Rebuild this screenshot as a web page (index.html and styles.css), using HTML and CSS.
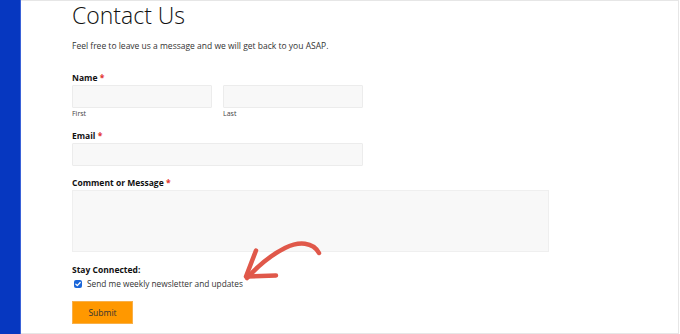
FILE: index.html
```html
<!DOCTYPE html>
<html>
<head>
<meta charset="utf-8">
<link rel="stylesheet" href="styles.css">
</head>
<body>
<div class="page">
  <div class="sidebar"></div>
  <main class="main">
    <h1 class="title">Contact Us</h1>
    <p class="intro">Feel free to leave us a message and we will get back to you ASAP.</p>
    <form class="form">
      <div class="field">
        <div class="label">Name <span class="req">*</span></div>
        <div class="name-row">
          <div class="sub">
            <div class="input"></div>
            <div class="sublabel">First</div>
          </div>
          <div class="sub">
            <div class="input"></div>
            <div class="sublabel">Last</div>
          </div>
        </div>
      </div>
      <div class="field field-email">
        <div class="label">Email <span class="req">*</span></div>
        <div class="input input-wide"></div>
      </div>
      <div class="field field-comment">
        <div class="label">Comment or Message <span class="req">*</span></div>
        <div class="textarea"></div>
      </div>
      <div class="field field-stay">
        <div class="label">Stay Connected:</div>
        <div class="check-row">
          <span class="checkbox"><svg viewBox="0 0 8 8" width="8" height="8"><path d="M1.8 4.1 L3.3 5.6 L6.2 2.5" fill="none" stroke="#fff" stroke-width="1.3" stroke-linecap="round" stroke-linejoin="round"/></svg></span>
          <span class="check-text">Send me weekly newsletter and updates</span>
        </div>
      </div>
      <div class="submit">Submit</div>
    </form>
    <svg class="arrow" viewBox="0 0 90 50" width="90" height="50">
      <path d="M78 27 C72 16 58 15 44 22 C30 29 16 41 6 52" transform="translate(0,-2)" fill="none" stroke="#e0584a" stroke-width="4.5" stroke-linecap="round"/>
      <path d="M15 23 L5 49 L35 48" transform="translate(0,-0.5)" fill="none" stroke="#e0584a" stroke-width="4.5" stroke-linecap="round" stroke-linejoin="round"/>
    </svg>
  </main>
</div>
</body>
</html>
```

FILE: styles.css
```css
html, body {
  margin: 0;
  padding: 0;
  background: #fff;
}
.page {
  display: flex;
  width: 680px;
  height: 334px;
  font-family: "Open Sans", "DejaVu Sans", sans-serif;
  color: #222;
}
.sidebar {
  width: 20px;
  background: #0637c0;
  border-right: 1px solid #3a62d8;
  flex: none;
}
.main {
  position: relative;
  flex: 1;
  height: 332px;
  border-top: 1px solid #e6e6e6;
  border-right: 1px solid #e6e6e6;
  border-bottom: 1px solid #e6e6e6;
  padding-left: 51px;
  margin-right: 1px;
}
.title {
  margin: 0;
  font-weight: 300;
  font-size: 23px;
  line-height: 28px;
  color: #111;
}
.intro {
  margin: 11px 0 0;
  font-size: 8.5px;
  line-height: 12px;
  color: #333;
}
.form {
  margin-top: 20px;
}
.label {
  font-size: 8.5px;
  font-weight: 700;
  line-height: 12px;
  color: #111;
}
.req {
  color: #e2312d;
}
.name-row {
  display: flex;
  gap: 11px;
  margin-top: 1px;
}
.input {
  width: 138px;
  height: 21px;
  background: #f8f8f8;
  border: 1px solid #ececec;
  border-radius: 1px;
}
.input-wide {
  width: 289px;
  margin-top: 1px;
}
.sublabel {
  font-size: 7px;
  line-height: 10px;
  color: #444;
  margin-top: 1px;
}
.field-email {
  margin-top: 11px;
}
.field-comment {
  margin-top: 11px;
}
.textarea {
  width: 475px;
  height: 60px;
  margin-top: 1px;
  background: #f8f8f8;
  border: 1px solid #efefef;
}
.field-stay {
  margin-top: 12px;
}
.check-row {
  display: flex;
  align-items: center;
  gap: 5px;
  margin-top: 2px;
  padding-left: 2px;
}
.checkbox {
  width: 8px;
  height: 8px;
  border-radius: 2px;
  background: #1a66d9;
  display: flex;
}
.check-text {
  font-size: 8.3px;
  line-height: 12px;
  color: #333;
}
.submit {
  margin-top: 11px;
  width: 59px;
  height: 21px;
  background: #ff9800;
  border: 1px solid #f8b04a;
  display: flex;
  align-items: center;
  justify-content: center;
  font-size: 8.5px;
  color: #333;
}
.arrow {
  position: absolute;
  left: 220px;
  top: 227px;
  overflow: visible;
}
```
